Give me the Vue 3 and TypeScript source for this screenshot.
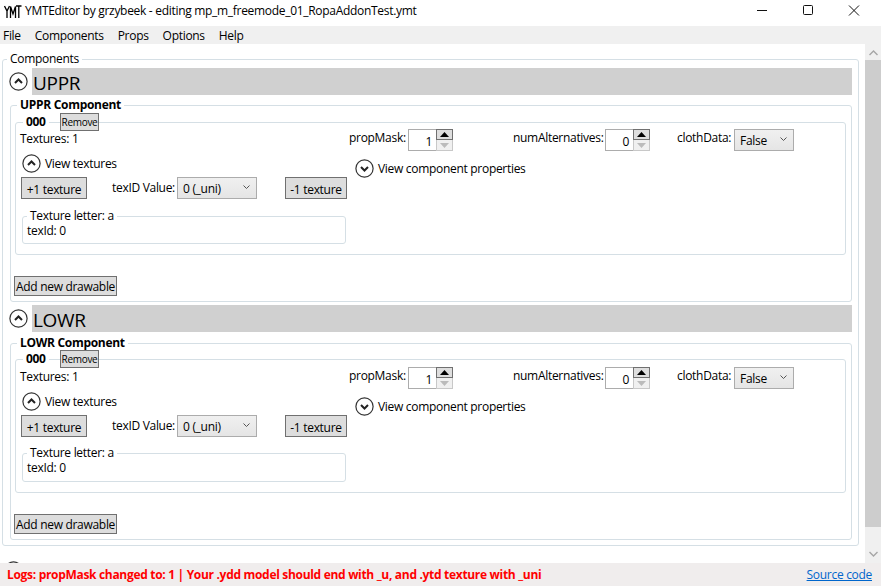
<script setup lang="ts">
const menus: string[] = ['File', 'Components', 'Props', 'Options', 'Help']
const sections: string[] = ['UPPR', 'LOWR']
const spinners = [
  { label: 'propMask:', value: '1', labelClass: 'l-mask' },
  { label: 'numAlternatives:', value: '0', labelClass: 'l-alt' }
]
</script>

<template>
  <div class="window">
    <header class="titlebar">
      <svg class="logo" width="18" height="14" viewBox="0 0 18 14" fill="none" stroke="#000" stroke-width="1.3">
        <path d="M0.5 1 L3 6 L5.5 1 M3 6 V13" />
        <path d="M6.5 13 V1.5 L9 9 L11.5 1.5 V13" />
        <path d="M12 1 H17.5 M14.8 1 V13" />
      </svg>
      <span class="title">YMTEditor by grzybeek - editing mp_m_freemode_01_RopaAddonTest.ymt</span>
      <div class="winbtns">
        <svg width="12" height="12" viewBox="0 0 12 12" stroke="#111" fill="none"><path d="M1 5.5 H11" /></svg>
        <svg width="12" height="12" viewBox="0 0 12 12" stroke="#111" fill="none"><rect x="1.5" y="0.5" width="9" height="9" rx="1" /></svg>
        <svg width="12" height="12" viewBox="0 0 12 12" stroke="#111" fill="none"><path d="M1 0.5 L11 10.5 M11 0.5 L1 10.5" /></svg>
      </div>
    </header>

    <nav class="menubar">
      <span v-for="m in menus" :key="m">{{ m }}</span>
    </nav>

    <main class="body">
      <div class="viewport">
        <fieldset class="box outer">
          <legend class="lg-outer">Components</legend>
          <section v-for="s in sections" :key="s" class="section">
            <div class="head">
              <svg class="circ" width="19" height="19" viewBox="0 0 19 19" fill="none">
                <circle cx="9.5" cy="9.5" r="8.6" stroke="#333" stroke-width="1.2" />
                <path d="M6 11 L9.5 7.5 L13 11" stroke="#222" stroke-width="2" />
              </svg>
              <div class="band">{{ s }}</div>
            </div>
            <fieldset class="box comp">
              <legend class="lg-comp">{{ s }} Component</legend>
              <fieldset class="box draw">
                <legend class="lg-draw">000</legend>
                <button class="btn remove">Remove</button>
                <div class="cols">
                  <div class="col-left">
                    <div class="tex-count">Textures: 1</div>
                    <div class="toggle toggle-tex">
                      <svg class="circ" width="19" height="19" viewBox="0 0 19 19" fill="none">
                        <circle cx="9.5" cy="9.5" r="8.6" stroke="#333" stroke-width="1.2" />
                        <path d="M6 11 L9.5 7.5 L13 11" stroke="#222" stroke-width="2" />
                      </svg>
                      <span>View textures</span>
                    </div>
                    <div class="tex-actions">
                      <button class="btn plus">+1 texture</button>
                      <span class="tex-label">texID Value:</span>
                      <div class="select sel-tex"><span>0 (_uni)</span><svg width="7" height="5" viewBox="0 0 7 5" fill="none" stroke="#555"><path d="M0.5 0.5 L3.5 3.5 L6.5 0.5" /></svg></div>
                      <button class="btn minus">-1 texture</button>
                    </div>
                    <fieldset class="box tex">
                      <legend class="lg-tex">Texture letter: a</legend>
                      <div class="tex-id">texId: 0</div>
                    </fieldset>
                  </div>
                  <div class="col-right">
                    <div class="props">
                      <template v-for="sp in spinners" :key="sp.label">
                        <span class="plabel" :class="sp.labelClass">{{ sp.label }}</span>
                        <div class="spin">
                          <div class="spin-val">{{ sp.value }}</div>
                          <div class="spin-btns">
                            <div class="up"><svg width="9" height="5" viewBox="0 0 9 5"><path d="M4.5 0 L9 5 H0 Z" fill="#000" /></svg></div>
                            <div class="down"><svg width="9" height="5" viewBox="0 0 9 5"><path d="M0 0 H9 L4.5 5 Z" fill="#bbb" /></svg></div>
                          </div>
                        </div>
                      </template>
                      <span class="plabel l-cloth">clothData:</span>
                      <div class="select sel-cloth"><span>False</span><svg width="7" height="5" viewBox="0 0 7 5" fill="none" stroke="#555"><path d="M0.5 0.5 L3.5 3.5 L6.5 0.5" /></svg></div>
                    </div>
                    <div class="toggle toggle-props">
                      <svg class="circ" width="19" height="19" viewBox="0 0 19 19" fill="none">
                        <circle cx="9.5" cy="9.5" r="8.6" stroke="#333" stroke-width="1.2" />
                        <path d="M6 8 L9.5 11.5 L13 8" stroke="#222" stroke-width="2" />
                      </svg>
                      <span>View component properties</span>
                    </div>
                  </div>
                </div>
              </fieldset>
              <button class="btn add">Add new drawable</button>
            </fieldset>
          </section>
        </fieldset>
        <svg class="next" width="19" height="19" viewBox="0 0 19 19" fill="none">
          <circle cx="9.5" cy="9.5" r="8.6" stroke="#333" stroke-width="1.2" />
        </svg>
      </div>
      <aside class="scrollbar">
        <svg width="9" height="6" viewBox="0 0 9 6" fill="none" stroke="#a6a6a6" stroke-width="1.4"><path d="M0.5 5 L4.5 1 L8.5 5" /></svg>
        <div class="thumb"></div>
        <svg class="arrow-down" width="9" height="6" viewBox="0 0 9 6" fill="none" stroke="#a6a6a6" stroke-width="1.4"><path d="M0.5 1 L4.5 5 L8.5 1" /></svg>
      </aside>
    </main>

    <footer class="status">
      <span class="log">Logs: propMask changed to: 1 | Your .ydd model should end with _u, and .ytd texture with _uni</span>
      <a class="link">Source code</a>
    </footer>
  </div>
</template>

<style>
html, body { margin: 0; background: #fff; overflow: hidden; }
</style>

<style scoped>
.window {
  width: 881px;
  height: 586px;
  display: flex;
  flex-direction: column;
  overflow: hidden;
  font-family: "Open Sans", "Noto Sans", sans-serif;
  font-size: 12px;
  letter-spacing: -0.3px;
  line-height: 16px;
  color: #000;
  background: #fff;
}
.titlebar {
  height: 26px;
  flex: none;
  display: flex;
  align-items: center;
  padding-left: 4px;
}
.logo { margin-right: 3px; margin-top: -2px; }
.title { flex: 1; margin-top: -4px; white-space: nowrap; }
.winbtns { display: flex; gap: 34px; padding-right: 16px; margin-top: -5px; margin-right: 5px; }
.menubar {
  box-sizing: border-box;
  height: 18px;
  flex: none;
  background: #f0f0f0;
  display: flex;
  gap: 14px;
  padding: 2px 0 0 3px;
  align-items: center;
}
.body { flex: 1; display: flex; min-height: 0; }
.viewport { flex: 1; overflow: hidden; min-width: 0; }
.box {
  margin: 0;
  padding: 0;
  min-width: 0;
  box-sizing: border-box;
  border: 1px solid #d5dfe5;
  border-radius: 3px;
  position: relative;
}
legend { padding: 0 3px; line-height: 16px; height: 16px; }
.outer { margin: 7px 6px 0 2px; padding: 1px 6px 5px 6px; width: 857px; }
.lg-outer { margin-left: -2px; }
.section + .section { margin-top: 3px; }
.head { display: flex; align-items: center; height: 27px; gap: 4px; }
.circ { flex: none; }
.band {
  flex: 1;
  height: 27px;
  background: #d0d0d0;
  font-size: 19px;
  line-height: 31px;
  padding-left: 1px;
  letter-spacing: -0.3px;
}
.comp { margin: 2px 0 0 1px; padding: 1px 5px 5px 4px; }
.section + .section .comp { margin-top: 3px; }
.lg-comp { margin-left: 2px; font-weight: 700; }
.draw { height: 141px; }
.section + .section .draw { margin-top: -1px; height: 142px; }
.lg-draw { margin-left: 7px; font-weight: 700; }
.btn {
  box-sizing: border-box;
  margin: 0;
  padding: 2px 0 0;
  border: 1px solid #707070;
  background: #dddddd;
  color: #000;
  font-family: inherit;
  letter-spacing: inherit;
}
.remove {
  position: absolute;
  left: 44px;
  top: -17px;
  width: 39px;
  height: 18px;
  padding: 0;
  font-size: 10px;
  line-height: 14px;
}
.cols { display: flex; padding: 1px 0 0 4px; }
.section + .section .cols { padding-top: 2px; }
.col-left { width: 329px; flex: none; }
.toggle { display: flex; align-items: center; gap: 4px; height: 19px; }
.toggle-tex { margin: 7px 0 0 2px; }
.tex-actions { display: flex; align-items: flex-start; margin: 4px 0 0 1px; height: 22px; }
.plus { width: 66px; height: 22px; font-size: 12px; }
.minus { width: 62px; height: 22px; font-size: 12px; margin-left: 28px; }
.tex-label { margin-left: 25px; width: 65px; flex: none; white-space: nowrap; margin-top: 3px; }
.select {
  box-sizing: border-box;
  height: 22px;
  border: 1px solid #acacac;
  background: linear-gradient(#f0f0f0, #e5e5e5);
  display: flex;
  align-items: center;
  justify-content: space-between;
  flex: none;
  padding: 2px 6px 0 5px;
}
.select svg { margin-top: -3px; }
.sel-tex { width: 80px; }
.sel-cloth { width: 60px; }
.tex { margin: 9px 0 0 2px; width: 324px; height: 36px; }
.section + .section .tex { margin-top: 8px; height: 37px; }
.lg-tex { margin-left: 4px; }
.tex-id { padding-left: 4px; line-height: 14px; height: 19px; }
.col-right { flex: 1; min-width: 0; }
.props { display: flex; align-items: flex-start; margin-top: -2px; height: 22px; }
.plabel { flex: none; white-space: nowrap; margin-top: 1px; }
.l-mask { width: 59px; }
.l-alt { width: 92px; margin-left: 60px; }
.l-cloth { width: 57px; margin-left: 27px; }
.spin { display: flex; height: 22px; flex: none; }
.spin-val {
  box-sizing: border-box;
  width: 28px;
  height: 22px;
  border: 1px solid #acacac;
  border-right: 0;
  text-align: right;
  padding: 4px 4px 0 0;
  line-height: 16px;
  font-size: 12px;
}
.spin-btns { width: 17px; display: flex; flex-direction: column; }
.up, .down {
  box-sizing: border-box;
  height: 11px;
  display: flex;
  align-items: center;
  justify-content: center;
}
.up { background: #dedede; border: 1px solid #707070; }
.down { background: #f0f0f0; border: 1px solid #c8c8c8; border-top: 0; }
.toggle-props { margin: 8px 0 0 6px; }
.add { display: block; width: 103px; height: 20px; margin: 21px 0 0 -1px; padding: 0; font-size: 12px; }
.next { display: block; margin: 15px 0 0 4px; }
.scrollbar {
  width: 16px;
  flex: none;
  background: #f0f0f0;
  display: flex;
  flex-direction: column;
  align-items: center;
  padding: 6px 0;
  box-sizing: border-box;
}
.thumb { width: 16px; height: 467px; margin-top: 4px; background: #cdcdcd; flex: none; }
.arrow-down { margin-top: auto; }
.status {
  height: 23px;
  flex: none;
  background: #f0eded;
  display: flex;
  align-items: center;
  justify-content: space-between;
  padding: 0 9px 0 7px;
}
.log { color: #f00; font-weight: 700; letter-spacing: -0.31px; }
.link { color: #0066cc; text-decoration: underline; }
</style>
